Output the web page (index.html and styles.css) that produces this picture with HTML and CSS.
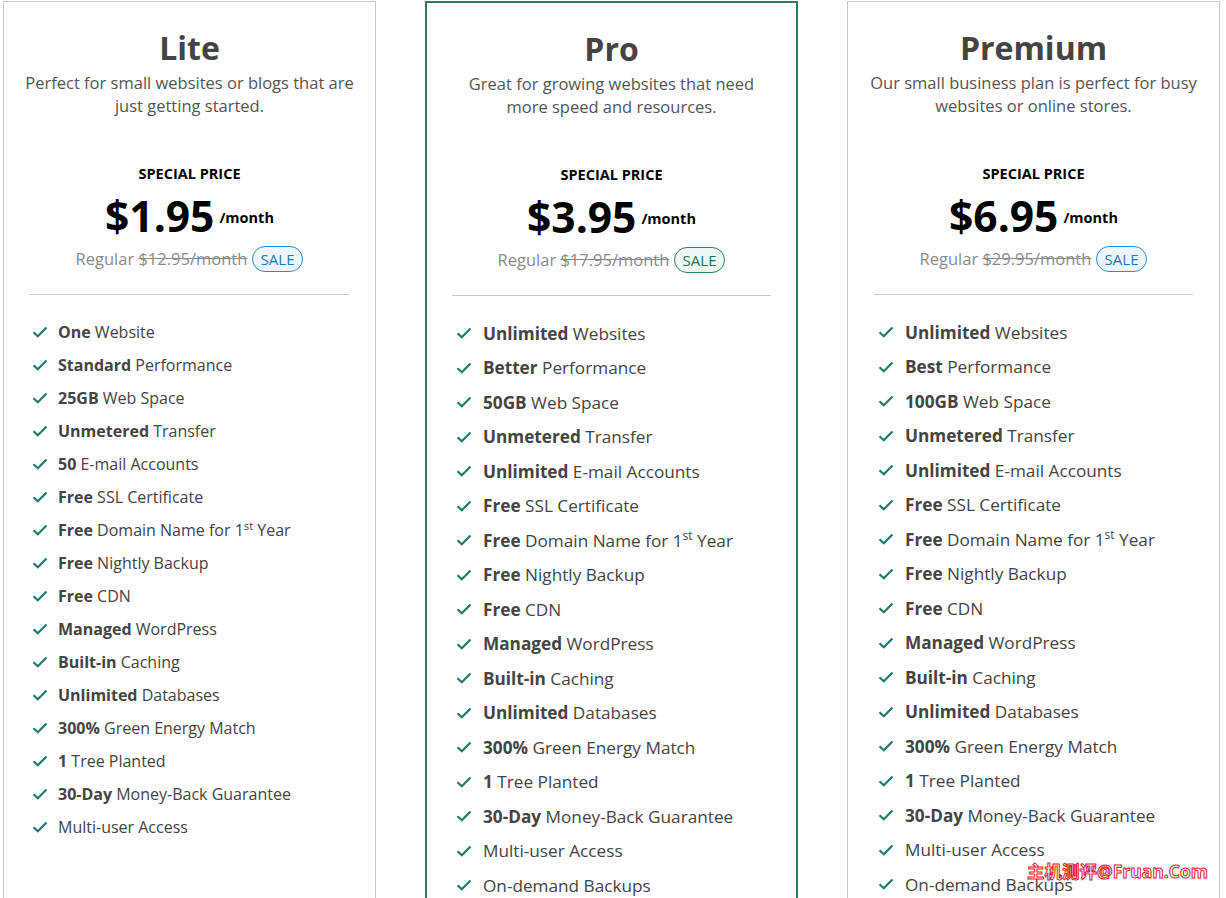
FILE: index.html
```html
<!DOCTYPE html>
<html>
<head>
<meta charset="utf-8">
<link rel="stylesheet" href="styles.css">
</head>
<body>
<div class="plans">
  <div class="card lite">
    <h2 class="title">Lite</h2>
    <p class="desc">Perfect for small websites or blogs that are just getting started.</p>
    <div class="special">SPECIAL PRICE</div>
    <div class="price"><span class="amount">$1.95</span><span class="per">/month</span></div>
    <div class="regular">Regular <s>$12.95/month</s> <span class="sale blue">SALE</span></div>
    <hr class="divider">
    <ul class="features">
      <li><svg class="check" viewBox="0 0 16 12"><path d="M1.5 6.2 L5.8 10.2 L14.5 1.5"/></svg><span><b>One</b> Website</span></li>
      <li><svg class="check" viewBox="0 0 16 12"><path d="M1.5 6.2 L5.8 10.2 L14.5 1.5"/></svg><span><b>Standard</b> Performance</span></li>
      <li><svg class="check" viewBox="0 0 16 12"><path d="M1.5 6.2 L5.8 10.2 L14.5 1.5"/></svg><span><b>25GB</b> Web Space</span></li>
      <li><svg class="check" viewBox="0 0 16 12"><path d="M1.5 6.2 L5.8 10.2 L14.5 1.5"/></svg><span><b>Unmetered</b> Transfer</span></li>
      <li><svg class="check" viewBox="0 0 16 12"><path d="M1.5 6.2 L5.8 10.2 L14.5 1.5"/></svg><span><b>50</b> E-mail Accounts</span></li>
      <li><svg class="check" viewBox="0 0 16 12"><path d="M1.5 6.2 L5.8 10.2 L14.5 1.5"/></svg><span><b>Free</b> SSL Certificate</span></li>
      <li><svg class="check" viewBox="0 0 16 12"><path d="M1.5 6.2 L5.8 10.2 L14.5 1.5"/></svg><span><b>Free</b> Domain Name for 1<sup>st</sup> Year</span></li>
      <li><svg class="check" viewBox="0 0 16 12"><path d="M1.5 6.2 L5.8 10.2 L14.5 1.5"/></svg><span><b>Free</b> Nightly Backup</span></li>
      <li><svg class="check" viewBox="0 0 16 12"><path d="M1.5 6.2 L5.8 10.2 L14.5 1.5"/></svg><span><b>Free</b> CDN</span></li>
      <li><svg class="check" viewBox="0 0 16 12"><path d="M1.5 6.2 L5.8 10.2 L14.5 1.5"/></svg><span><b>Managed</b> WordPress</span></li>
      <li><svg class="check" viewBox="0 0 16 12"><path d="M1.5 6.2 L5.8 10.2 L14.5 1.5"/></svg><span><b>Built-in</b> Caching</span></li>
      <li><svg class="check" viewBox="0 0 16 12"><path d="M1.5 6.2 L5.8 10.2 L14.5 1.5"/></svg><span><b>Unlimited</b> Databases</span></li>
      <li><svg class="check" viewBox="0 0 16 12"><path d="M1.5 6.2 L5.8 10.2 L14.5 1.5"/></svg><span><b>300%</b> Green Energy Match</span></li>
      <li><svg class="check" viewBox="0 0 16 12"><path d="M1.5 6.2 L5.8 10.2 L14.5 1.5"/></svg><span><b>1</b> Tree Planted</span></li>
      <li><svg class="check" viewBox="0 0 16 12"><path d="M1.5 6.2 L5.8 10.2 L14.5 1.5"/></svg><span><b>30-Day</b> Money-Back Guarantee</span></li>
      <li><svg class="check" viewBox="0 0 16 12"><path d="M1.5 6.2 L5.8 10.2 L14.5 1.5"/></svg><span>Multi-user Access</span></li>
    </ul>
  </div>

  <div class="card pro">
    <h2 class="title">Pro</h2>
    <p class="desc">Great for growing websites that need more speed and resources.</p>
    <div class="special">SPECIAL PRICE</div>
    <div class="price"><span class="amount">$3.95</span><span class="per">/month</span></div>
    <div class="regular">Regular <s>$17.95/month</s> <span class="sale green">SALE</span></div>
    <hr class="divider">
    <ul class="features big">
      <li><svg class="check" viewBox="0 0 16 12"><path d="M1.5 6.2 L5.8 10.2 L14.5 1.5"/></svg><span><b>Unlimited</b> Websites</span></li>
      <li><svg class="check" viewBox="0 0 16 12"><path d="M1.5 6.2 L5.8 10.2 L14.5 1.5"/></svg><span><b>Better</b> Performance</span></li>
      <li><svg class="check" viewBox="0 0 16 12"><path d="M1.5 6.2 L5.8 10.2 L14.5 1.5"/></svg><span><b>50GB</b> Web Space</span></li>
      <li><svg class="check" viewBox="0 0 16 12"><path d="M1.5 6.2 L5.8 10.2 L14.5 1.5"/></svg><span><b>Unmetered</b> Transfer</span></li>
      <li><svg class="check" viewBox="0 0 16 12"><path d="M1.5 6.2 L5.8 10.2 L14.5 1.5"/></svg><span><b>Unlimited</b> E-mail Accounts</span></li>
      <li><svg class="check" viewBox="0 0 16 12"><path d="M1.5 6.2 L5.8 10.2 L14.5 1.5"/></svg><span><b>Free</b> SSL Certificate</span></li>
      <li><svg class="check" viewBox="0 0 16 12"><path d="M1.5 6.2 L5.8 10.2 L14.5 1.5"/></svg><span><b>Free</b> Domain Name for 1<sup>st</sup> Year</span></li>
      <li><svg class="check" viewBox="0 0 16 12"><path d="M1.5 6.2 L5.8 10.2 L14.5 1.5"/></svg><span><b>Free</b> Nightly Backup</span></li>
      <li><svg class="check" viewBox="0 0 16 12"><path d="M1.5 6.2 L5.8 10.2 L14.5 1.5"/></svg><span><b>Free</b> CDN</span></li>
      <li><svg class="check" viewBox="0 0 16 12"><path d="M1.5 6.2 L5.8 10.2 L14.5 1.5"/></svg><span><b>Managed</b> WordPress</span></li>
      <li><svg class="check" viewBox="0 0 16 12"><path d="M1.5 6.2 L5.8 10.2 L14.5 1.5"/></svg><span><b>Built-in</b> Caching</span></li>
      <li><svg class="check" viewBox="0 0 16 12"><path d="M1.5 6.2 L5.8 10.2 L14.5 1.5"/></svg><span><b>Unlimited</b> Databases</span></li>
      <li><svg class="check" viewBox="0 0 16 12"><path d="M1.5 6.2 L5.8 10.2 L14.5 1.5"/></svg><span><b>300%</b> Green Energy Match</span></li>
      <li><svg class="check" viewBox="0 0 16 12"><path d="M1.5 6.2 L5.8 10.2 L14.5 1.5"/></svg><span><b>1</b> Tree Planted</span></li>
      <li><svg class="check" viewBox="0 0 16 12"><path d="M1.5 6.2 L5.8 10.2 L14.5 1.5"/></svg><span><b>30-Day</b> Money-Back Guarantee</span></li>
      <li><svg class="check" viewBox="0 0 16 12"><path d="M1.5 6.2 L5.8 10.2 L14.5 1.5"/></svg><span>Multi-user Access</span></li>
      <li><svg class="check" viewBox="0 0 16 12"><path d="M1.5 6.2 L5.8 10.2 L14.5 1.5"/></svg><span>On-demand Backups</span></li>
    </ul>
  </div>

  <div class="card premium">
    <h2 class="title">Premium</h2>
    <p class="desc">Our small business plan is perfect for busy websites or online stores.</p>
    <div class="special">SPECIAL PRICE</div>
    <div class="price"><span class="amount">$6.95</span><span class="per">/month</span></div>
    <div class="regular">Regular <s>$29.95/month</s> <span class="sale blue">SALE</span></div>
    <hr class="divider">
    <ul class="features big">
      <li><svg class="check" viewBox="0 0 16 12"><path d="M1.5 6.2 L5.8 10.2 L14.5 1.5"/></svg><span><b>Unlimited</b> Websites</span></li>
      <li><svg class="check" viewBox="0 0 16 12"><path d="M1.5 6.2 L5.8 10.2 L14.5 1.5"/></svg><span><b>Best</b> Performance</span></li>
      <li><svg class="check" viewBox="0 0 16 12"><path d="M1.5 6.2 L5.8 10.2 L14.5 1.5"/></svg><span><b>100GB</b> Web Space</span></li>
      <li><svg class="check" viewBox="0 0 16 12"><path d="M1.5 6.2 L5.8 10.2 L14.5 1.5"/></svg><span><b>Unmetered</b> Transfer</span></li>
      <li><svg class="check" viewBox="0 0 16 12"><path d="M1.5 6.2 L5.8 10.2 L14.5 1.5"/></svg><span><b>Unlimited</b> E-mail Accounts</span></li>
      <li><svg class="check" viewBox="0 0 16 12"><path d="M1.5 6.2 L5.8 10.2 L14.5 1.5"/></svg><span><b>Free</b> SSL Certificate</span></li>
      <li><svg class="check" viewBox="0 0 16 12"><path d="M1.5 6.2 L5.8 10.2 L14.5 1.5"/></svg><span><b>Free</b> Domain Name for 1<sup>st</sup> Year</span></li>
      <li><svg class="check" viewBox="0 0 16 12"><path d="M1.5 6.2 L5.8 10.2 L14.5 1.5"/></svg><span><b>Free</b> Nightly Backup</span></li>
      <li><svg class="check" viewBox="0 0 16 12"><path d="M1.5 6.2 L5.8 10.2 L14.5 1.5"/></svg><span><b>Free</b> CDN</span></li>
      <li><svg class="check" viewBox="0 0 16 12"><path d="M1.5 6.2 L5.8 10.2 L14.5 1.5"/></svg><span><b>Managed</b> WordPress</span></li>
      <li><svg class="check" viewBox="0 0 16 12"><path d="M1.5 6.2 L5.8 10.2 L14.5 1.5"/></svg><span><b>Built-in</b> Caching</span></li>
      <li><svg class="check" viewBox="0 0 16 12"><path d="M1.5 6.2 L5.8 10.2 L14.5 1.5"/></svg><span><b>Unlimited</b> Databases</span></li>
      <li><svg class="check" viewBox="0 0 16 12"><path d="M1.5 6.2 L5.8 10.2 L14.5 1.5"/></svg><span><b>300%</b> Green Energy Match</span></li>
      <li><svg class="check" viewBox="0 0 16 12"><path d="M1.5 6.2 L5.8 10.2 L14.5 1.5"/></svg><span><b>1</b> Tree Planted</span></li>
      <li><svg class="check" viewBox="0 0 16 12"><path d="M1.5 6.2 L5.8 10.2 L14.5 1.5"/></svg><span><b>30-Day</b> Money-Back Guarantee</span></li>
      <li><svg class="check" viewBox="0 0 16 12"><path d="M1.5 6.2 L5.8 10.2 L14.5 1.5"/></svg><span>Multi-user Access</span></li>
      <li><svg class="check" viewBox="0 0 16 12"><path d="M1.5 6.2 L5.8 10.2 L14.5 1.5"/></svg><span>On-demand Backups</span></li>
    </ul>
  </div>
</div>
<div class="watermark">主机测评@Fruan.Com</div>
</body>
</html>
```

FILE: styles.css
```css
html, body {
  margin: 0;
  padding: 0;
  background: #fff;
  overflow: hidden;
}
body {
  font-family: "Open Sans", "Noto Sans CJK SC", sans-serif;
  color: #444;
  height: 898px;
}
.plans {
  display: flex;
  gap: 49px;
  padding: 1px 0 0 3px;
  align-items: flex-start;
}
.card {
  box-sizing: border-box;
  width: 373px;
  min-height: 960px;
  border: 1px solid #c8c8c8;
  padding: 0 26px;
  text-align: center;
}
.card.pro {
  border: 2px solid #2a7d63;
  padding: 0 25px;
}
.title {
  margin: 26px 0 0;
  font-size: 32px;
  line-height: 40px;
  font-weight: 700;
  color: #444;
}
.desc {
  margin: 3px -12px 0;
  font-size: 16.5px;
  line-height: 23px;
  color: #555;
}
.card.pro .desc {
  margin: 3px 0 0;
}
.special {
  margin-top: 47px;
  font-size: 14.5px;
  line-height: 20px;
  font-weight: 700;
  color: #000;
}
.price {
  display: flex;
  justify-content: center;
  align-items: flex-start;
  margin-top: 8px;
}
.amount {
  font-size: 42.5px;
  line-height: 48px;
  font-weight: 700;
  color: #000;
}
.per {
  font-size: 14.5px;
  line-height: 20px;
  font-weight: 700;
  color: #000;
  margin: 16px 0 0 5px;
}
.regular {
  margin-top: 6px;
  font-size: 16.5px;
  line-height: 26px;
  color: #8a8a8a;
}
.regular s {
  color: #8a8a8a;
}
.sale {
  display: inline-block;
  box-sizing: border-box;
  height: 26px;
  line-height: 24px;
  padding: 0 8px;
  border-radius: 13px;
  font-size: 15px;
  vertical-align: middle;
  margin-top: -3px;
}
.sale.blue {
  border: 1px solid #2d8ccd;
  background: #eef6fd;
  color: #2a78b2;
}
.sale.green {
  border: 1px solid #2a7d63;
  background: #eef7f2;
  color: #2a6f57;
}
.divider {
  border: 0;
  border-top: 1px solid #c8c8c8;
  margin: 22px 0 0;
}
.features {
  list-style: none;
  margin: 20px 0 0;
  padding: 0 0 0 2px;
  text-align: left;
}
.features li {
  display: flex;
  align-items: center;
  height: 33px;
  font-size: 16px;
  color: #444;
}
.features.big {
  padding-left: 4px;
}
.features.big li {
  height: 34.5px;
  font-size: 17.2px;
}
.features b {
  font-weight: 700;
  color: #444;
}
.features sup {
  font-size: 0.7em;
  line-height: 0;
}
.check {
  width: 16px;
  height: 12px;
  flex: none;
  margin-right: 10px;
  fill: none;
  stroke: #1f7a6b;
  stroke-width: 2.2;
}
.features.big .check {
  margin-right: 11px;
}
.watermark {
  position: absolute;
  left: 1027px;
  top: 860px;
  font-size: 17.5px;
  line-height: 22px;
  font-weight: 700;
  color: #fff;
  -webkit-text-stroke: 1px #e8202a;
}
```
